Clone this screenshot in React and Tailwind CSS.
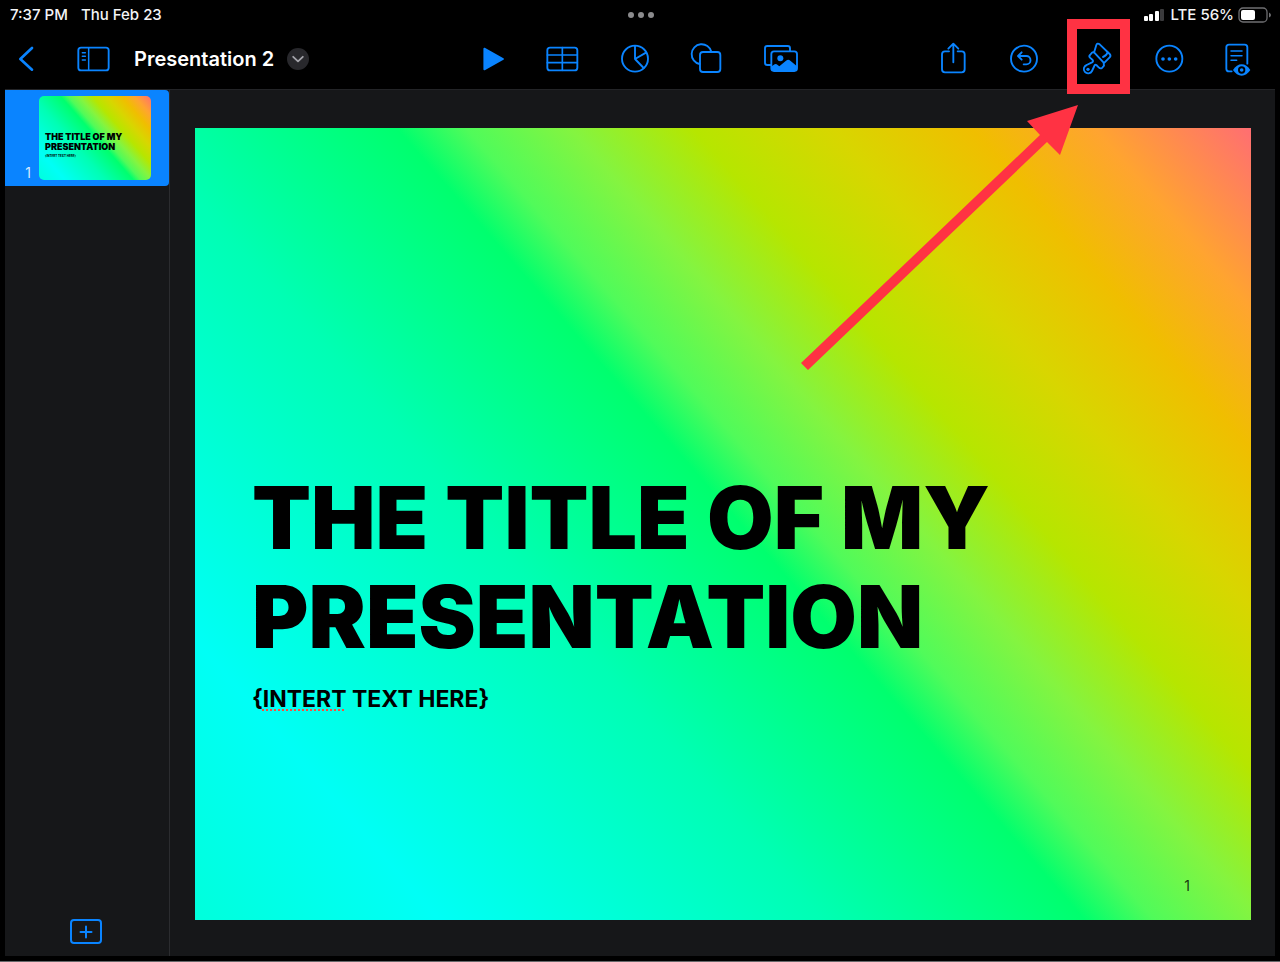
const slides = [
  { id: 1, title: "THE TITLE OF MY PRESENTATION", marked: "INTERT", rest: " TEXT HERE" },
];

function Icon({ box, children }) {
  return (
    <svg
      viewBox={box}
      className="size-9 overflow-visible"
      fill="none"
      stroke="currentColor"
      strokeWidth="5.6"
      strokeLinecap="round"
      strokeLinejoin="round"
      aria-hidden="true"
    >
      {children}
    </svg>
  );
}

const insertTools = [
  {
    label: "Play",
    icon: (
      <Icon box="42 123 108 108">
        <path d="M73 146 V208 L129 177 Z" fill="currentColor" />
      </Icon>
    ),
  },
  {
    label: "Table",
    icon: (
      <Icon box="258 123 108 108">
        <rect x="262" y="143" width="90" height="68" rx="8" />
        <path d="M307 143 V211 M262 165 H352 M262 188 H352" strokeWidth="5" />
      </Icon>
    ),
  },
  {
    label: "Chart",
    icon: (
      <Icon box="474 123 108 108">
        <circle cx="525" cy="176" r="39" />
        <path d="M525 138 V177 L558 158 M525 177 L551 204" />
      </Icon>
    ),
  },
  {
    label: "Shape",
    icon: (
      <Icon box="690 123 108 108">
        <path d="M719 192 A30 30 0 1 1 754 155" />
        <rect x="720" y="156" width="61" height="60" rx="9" />
      </Icon>
    ),
  },
  {
    label: "Media",
    icon: (
      <Icon box="906 123 108 108">
        <path d="M932 195 H922 Q915 195 915 188 V145 Q915 138 922 138 H983 Q990 138 990 145 V152" />
        <rect x="934" y="154" width="77" height="59" rx="8" />
        <circle cx="961" cy="175" r="9" fill="currentColor" stroke="none" />
        <path
          d="M935 199 L944 193 Q947 191 950 193 L958 199 L978 182 Q985 177 991 182 L1011 199 V206 Q1011 213 1004 213 H942 Q935 213 935 206 Z"
          fill="currentColor"
          stroke="none"
        />
      </Icon>
    ),
  },
];

const documentTools = [
  {
    label: "Share",
    icon: (
      <Icon box="44 123 108 108">
        <path d="M86 154 H74 Q65 154 65 163 V208 Q65 217 74 217 H124 Q133 217 133 208 V163 Q133 154 124 154 H112" />
        <path d="M99 187 V132 M84 146 L99 131 L114 146" />
      </Icon>
    ),
  },
  {
    label: "Undo",
    icon: (
      <Icon box="257 123 108 108">
        <circle cx="311" cy="176" r="39" />
        <path d="M304 157 L293 168 L304 179 M294 168 H318 A12 12 0 0 1 318 193 H310" />
      </Icon>
    ),
  },
  {
    label: "Format",
    icon: (
      <Icon box="39 75 108 108">
        <path d="M90 110 L97 87 Q100 80 107 85 L137 114 Q142 119 137 124 L119 142 L120 149 L114 156 Q109 159 104 154 L97 147 Q93 145 91 150 L84 165 A13 13 0 1 1 68 147 L84 139 Q89 136 86 132 L78 125 Q74 121 78 117 L84 110 Q87 107 91 110 L119 140" />
        <path d="M131 109 Q128 119 117 123" />
        <circle cx="72" cy="160" r="5" fill="currentColor" stroke="none" />
      </Icon>
    ),
  },
  {
    label: "More",
    icon: (
      <Icon box="683 123 108 108">
        <circle cx="747" cy="176" r="39" />
        <g fill="currentColor" stroke="none">
          <circle cx="728" cy="177" r="5.5" />
          <circle cx="747" cy="177" r="5.5" />
          <circle cx="766" cy="177" r="5.5" />
        </g>
      </Icon>
    ),
  },
  {
    label: "Reading view",
    icon: (
      <Icon box="896 123 108 108">
        <path d="M934 214 H926 Q918 214 918 206 V142 Q918 134 926 134 H973 Q981 134 981 142 V191" />
        <path d="M932 153 H965 M932 167 H965 M932 181 H949" strokeWidth="4.5" />
        <path
          d="M938 210 Q949 193 964 193 Q979 193 990 210 Q979 227 964 227 Q949 227 938 210 Z"
          fill="currentColor"
          stroke="none"
        />
        <circle cx="964" cy="210" r="11" fill="#000" stroke="none" />
        <circle cx="964" cy="210" r="5.5" fill="currentColor" stroke="none" />
      </Icon>
    ),
  },
];

function StatusBar() {
  return (
    <div className="grid h-[29px] grid-cols-[1fr_auto_1fr] items-center pt-px pr-[9px] pl-[10px] text-[15px] font-medium text-gray-100">
      <div className="flex gap-[13px]">
        <span>7:37 PM</span>
        <span>Thu Feb 23</span>
      </div>
      <div className="flex gap-1">
        <span className="size-[6px] rounded-full bg-[#8b8b8d]" />
        <span className="size-[6px] rounded-full bg-[#8b8b8d]" />
        <span className="size-[6px] rounded-full bg-[#8b8b8d]" />
      </div>
      <div className="flex items-center justify-end gap-1">
        <svg width="22" height="13" viewBox="0 0 22 13" aria-hidden="true" fill="#fff">
          <rect x="0" y="7" width="4" height="5" rx="1" />
          <rect x="5" y="5" width="4" height="7" rx="1" />
          <rect x="11" y="2" width="4" height="10" rx="1" />
          <rect x="16" y="0" width="4" height="12" rx="1" fill="#3a3a3c" />
        </svg>
        <span>LTE</span>
        <span>56%</span>
        <svg width="33" height="16" viewBox="0 0 33 16" aria-hidden="true">
          <rect x="1" y="1" width="28" height="14" rx="4" fill="none" stroke="#6f6f72" strokeWidth="1.3" />
          <rect x="3" y="3" width="14" height="10" rx="2" fill="#fff" />
          <path d="M31 5.5 Q33 6.5 33 8 Q33 9.5 31 10.5 Z" fill="#6f6f72" />
        </svg>
      </div>
    </div>
  );
}

function Toolbar() {
  return (
    <header className="flex h-[60px] items-center pr-2 text-[#0a84ff]">
      <div className="flex flex-1 items-center">
        <button type="button" aria-label="Back" className="ml-2">
          <Icon box="24 123 108 108">
            <path d="M96 144 L61 177 L96 209" strokeWidth="8" />
          </Icon>
        </button>
        <button type="button" aria-label="View options" className="ml-8">
          <Icon box="228 123 108 108">
            <rect x="235" y="143" width="91" height="68" rx="8" />
            <path d="M266 143 V211 M247 158 H256 M247 169 H256 M247 180 H256" strokeWidth="4.5" />
          </Icon>
        </button>
        <h1 className="ml-[22px] text-[20px] font-semibold whitespace-nowrap text-white">Presentation 2</h1>
        <button
          type="button"
          aria-label="Document options"
          className="ml-[13px] flex size-[22px] items-center justify-center rounded-full bg-[#28282c] text-[#a4a4aa]"
        >
          <svg width="12" height="8" viewBox="0 0 12 8" fill="none" stroke="currentColor" strokeWidth="1.8" strokeLinecap="round" strokeLinejoin="round">
            <path d="M1.2 1.8 L6 6.4 L10.8 1.8" />
          </svg>
        </button>
      </div>
      <div className="flex">
        {insertTools.map((tool) => (
          <button key={tool.label} type="button" aria-label={tool.label} className="flex w-[72px] justify-center">
            {tool.icon}
          </button>
        ))}
      </div>
      <div className="flex flex-1 justify-end">
        {documentTools.map((tool) => (
          <button key={tool.label} type="button" aria-label={tool.label} className="flex w-[71px] justify-center">
            {tool.icon}
          </button>
        ))}
      </div>
    </header>
  );
}

const slideFill =
  "bg-[linear-gradient(49deg,#00ffdc_0%,#00fff6_14%,#00ffb4_36%,#00ff6e_51%,#50fb5a_55%,#84f440_61%,#b6e600_68%,#d8d600_76%,#f0be00_84%,#ffa430_91%,#ff6e72_100%)]";

function SlideList() {
  return (
    <nav aria-label="Slides" className="flex w-[165px] shrink-0 flex-col border-r border-[#2b2c2f]">
      {slides.map((slide) => (
        <button
          key={slide.id}
          type="button"
          aria-current="true"
          className="flex h-24 items-end rounded-r bg-[#0a84ff] pr-[18px] pb-[6px] text-left"
        >
          <span className="w-[34px] pr-2 text-right text-[14px] leading-none text-[#d6e9ff]">{slide.id}</span>
          <span className={`flex aspect-[4/3] flex-1 flex-col rounded-[5px] pt-9 pl-[6px] text-black ${slideFill}`}>
            <span className="text-[9px] leading-[10px] font-black">
              THE TITLE OF MY
              <br />
              PRESENTATION
            </span>
            <span className="mt-[2px] text-[3px] leading-[4px] font-bold">{`{${slide.marked}${slide.rest}}`}</span>
          </span>
        </button>
      ))}
      <button
        type="button"
        aria-label="Add slide"
        className="mt-auto mr-[67px] mb-3 flex h-[25px] w-8 items-center justify-center self-end rounded-[4px] border-2 border-[#0a84ff] text-[#0a84ff]"
      >
        <svg width="14" height="14" viewBox="0 0 14 14" stroke="currentColor" strokeWidth="2" strokeLinecap="round">
          <path d="M7 1.5 V12.5 M1.5 7 H12.5" />
        </svg>
      </button>
    </nav>
  );
}

function Slide({ slide }) {
  return (
    <article className={`relative flex aspect-[4/3] w-full flex-col justify-end pb-[205px] pl-[57px] text-black ${slideFill}`}>
      <h2 className="max-w-[760px] text-[86px] leading-[99px] font-black">{slide.title}</h2>
      <p className="mt-4 text-[23px] leading-8 font-bold">
        {"{"}
        <span className="underline decoration-[#ff4a3d] decoration-dotted decoration-2 underline-offset-2">
          {slide.marked}
        </span>
        {slide.rest}
        {"}"}
      </p>
      <span className="absolute right-[61px] bottom-6 text-[14px] text-black/80">{slide.id}</span>
    </article>
  );
}

// Red frame round the format brush, with the arrow that points at it
function Callout() {
  return (
    <svg
      className="pointer-events-none absolute top-[19px] right-[150px]"
      width="330"
      height="355"
      viewBox="800 19 330 355"
      aria-hidden="true"
    >
      <rect x="1072" y="24" width="53" height="65" fill="none" stroke="#ff3243" strokeWidth="10" />
      <path d="M1078 105 L1060 155 L1047 142 L808 370 L801 363 L1040 135 L1027 121 Z" fill="#ff3243" />
    </svg>
  );
}

export default function App() {
  return (
    <div className="relative flex min-h-screen flex-col border-b border-[#66676a] bg-black font-['Inter','Liberation_Sans',sans-serif]">
      <StatusBar />
      <Toolbar />
      <div className="mr-[5px] mb-[5px] ml-[5px] flex flex-1 border-t border-[#232427] bg-[#161719]">
        <SlideList />
        <main className="flex-1 pt-[38px] pr-6 pb-9 pl-[25px]">
          <Slide slide={slides[0]} />
        </main>
      </div>
      <Callout />
    </div>
  );
}
